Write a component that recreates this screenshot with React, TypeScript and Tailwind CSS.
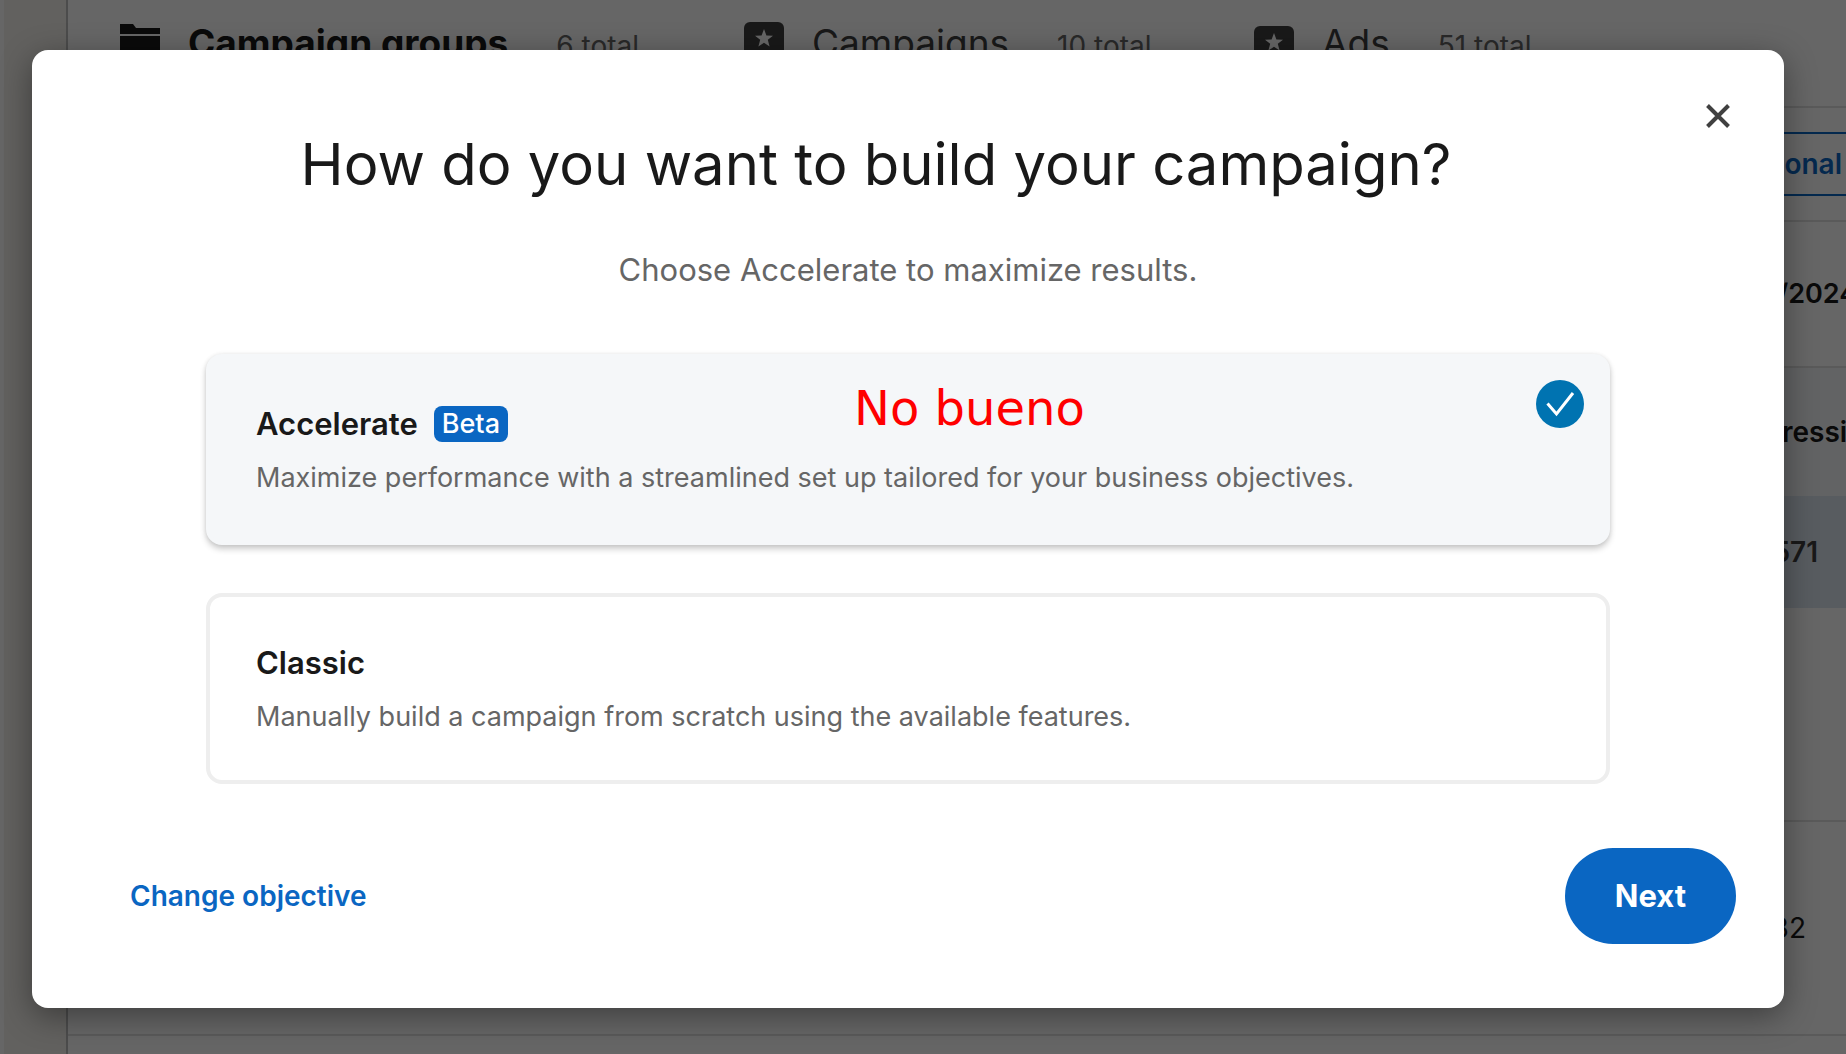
import { useState } from "react";
import type { ReactNode } from "react";

type Mode = "accelerate" | "classic";

interface OptionCardProps {
  value: Mode;
  selected: boolean;
  title: string;
  badge?: string;
  description: string;
  note?: string;
  onSelect: (value: Mode) => void;
}

function FolderIcon() {
  return (
    <svg viewBox="0 0 40 36" className="h-9 w-10" aria-hidden="true">
      <path d="M0 0h13l3 4h24v6H0zM0 12h40v24H0z" fill="#191919" />
    </svg>
  );
}

function CampaignIcon() {
  return (
    <svg viewBox="0 0 40 40" className="h-10 w-10" aria-hidden="true">
      <rect width="40" height="40" rx="6" fill="#404040" />
      <path d="M20 7l2.400 6.500 6.600.2-5.200 4.100 1.800 6.700-5.600-3.800-5.600 3.800 1.800-6.700-5.200-4.100 6.600-.2z" fill="#fff" />
    </svg>
  );
}

function AdIcon() {
  return (
    <svg viewBox="0 0 40 32" className="h-8 w-10" aria-hidden="true">
      <rect width="40" height="32" rx="6" fill="#404040" />
      <path d="M20 7l2.400 6.500 6.600.2-5.200 4.100 1.800 6.700-5.600-3.800-5.600 3.800 1.800-6.700-5.200-4.100 6.600-.2z" fill="#fff" />
    </svg>
  );
}

function PageTab({ icon, label, total, active }: { icon: ReactNode; label: string; total: string; active?: boolean }) {
  return (
    <div className={`flex h-10 shrink-0 items-center gap-7 whitespace-nowrap ${active ? "w-[624px]" : "w-[510px]"}`}>
      {icon}
      <div className="flex items-baseline gap-12 pt-1">
        <span className={`text-[37px] leading-10 ${active ? "font-bold text-[#191919]" : "font-normal text-[#404040]"}`}>
          {label}
        </span>
        <span className="text-[28px] leading-10 font-normal text-[#666666]">{total}</span>
      </div>
    </div>
  );
}

function CampaignPage() {
  return (
    <div className="flex h-full bg-white" aria-hidden="true">
      <div className="w-1 shrink-0" />
      <div className="w-16 shrink-0 border-r-2 border-[#bfbfbf] bg-[#f4f2ee]" />
      <div className="min-w-0 flex-1 overflow-hidden text-[28px] leading-10 font-semibold text-[#191919]">
        <div className="flex h-[108px] border-b-2 border-[#e0e0e0] pt-[22px] pl-[52px]">
          <PageTab icon={<FolderIcon />} label="Campaign groups" total="6 total" active />
          <PageTab icon={<CampaignIcon />} label="Campaigns" total="10 total" />
          <PageTab icon={<AdIcon />} label="Ads" total="51 total" />
        </div>
        <div className="flex h-[114px] items-center justify-end border-b-2 border-[#e0e0e0]">
          <div className="flex h-16 w-40 items-center justify-end border-y-2 border-[#0a66c2] pr-1 text-[#0a66c2]">onal</div>
        </div>
        <div className="flex h-[146px] items-center justify-end border-b-2 border-[#e0e0e0] text-[27px]">
          <span className="w-[68px]">/2024</span>
        </div>
        <div className="flex h-32 items-center justify-end bg-[#f6f8fb]">
          <span className="w-16">ressi</span>
        </div>
        <div className="flex h-28 items-center justify-end bg-[#dce6f1] pr-7 text-[#404040]">571</div>
        <div className="h-[214px] border-b-2 border-[#e0e0e0]" />
        <div className="flex h-[214px] items-center justify-end border-b-2 border-[#e0e0e0] pr-10 font-normal">82</div>
      </div>
    </div>
  );
}

function OptionCard({ value, selected, title, badge, description, note, onSelect }: OptionCardProps) {
  return (
    <label
      className={`relative block cursor-pointer rounded-2xl border-4 px-[46px] pt-[46px] pb-[43px] ${
        selected
          ? "border-[#f5f7f9] bg-[#f5f7f9] shadow-[0_4px_6px_rgba(0,0,0,0.2),0_0_4px_rgba(0,0,0,0.08)]"
          : "border-[#eeeeee] bg-white"
      }`}
    >
      <input
        type="radio"
        name="mode"
        value={value}
        checked={selected}
        onChange={() => onSelect(value)}
        className="sr-only"
      />
      <span className="flex items-center gap-4">
        <span className="text-[31px] leading-10 font-semibold text-[#191919]">{title}</span>
        {badge && (
          <span className="rounded-lg bg-[#0a66c2] px-2 text-[27px] leading-9 font-medium text-white">{badge}</span>
        )}
      </span>
      <span className="mt-3.5 block text-[27px] leading-10 text-[#666666]">{description}</span>
      {note && (
        <span className="absolute top-5 left-[644px] font-['DejaVu_Sans',sans-serif] text-[48px] leading-[60px] text-[#ff0000]">
          {note}
        </span>
      )}
      {selected && (
        <svg viewBox="0 0 48 48" className="absolute top-[22px] right-[22px] size-12" aria-hidden="true">
          <circle cx="24" cy="24" r="24" fill="#0073b1" />
          <path d="M11.500 23.500l9 10.500L37 13" fill="none" stroke="#fff" strokeWidth="3" />
        </svg>
      )}
    </label>
  );
}

export default function App() {
  const [mode, setMode] = useState<Mode>("accelerate");

  return (
    <div className="relative h-screen overflow-hidden font-['Inter',sans-serif]">
      <CampaignPage />
      <div className="absolute inset-0 bg-black/60 pt-[50px] pr-[62px] pl-8">
        <div
          role="dialog"
          aria-modal="true"
          aria-labelledby="dialog-title"
          className="relative rounded-2xl bg-white pb-16 shadow-[0_8px_32px_rgba(0,0,0,0.4)]"
        >
          <button type="button" aria-label="Dismiss" className="absolute top-12 right-12 p-1.5">
            <svg viewBox="0 0 24 24" className="size-6" fill="none" stroke="#404040" strokeWidth="4" aria-hidden="true">
              <path d="M1.500 1.500l21 21M22.500 1.500l-21 21" />
            </svg>
          </button>

          <h1 id="dialog-title" className="pt-[74px] pr-16 text-center text-[58px] leading-[80px] text-[#191919]">
            How do you want to build your campaign?
          </h1>
          <p className="mt-[46px] text-center text-[31px] leading-10 text-[#666666]">
            Choose Accelerate to maximize results.
          </p>

          <div className="mt-16 flex flex-col gap-12 px-[174px]">
            <OptionCard
              value="accelerate"
              selected={mode === "accelerate"}
              title="Accelerate"
              badge="Beta"
              description="Maximize performance with a streamlined set up tailored for your business objectives."
              note="No bueno"
              onSelect={setMode}
            />
            <OptionCard
              value="classic"
              selected={mode === "classic"}
              title="Classic"
              description="Manually build a campaign from scratch using the available features."
              onSelect={setMode}
            />
          </div>

          <div className="mt-16 flex items-center justify-between pr-12 pl-[98px]">
            <button type="button" className="text-[28px] leading-10 font-semibold text-[#0a66c2]">
              Change objective
            </button>
            <button type="button" className="h-24 rounded-full bg-[#0a66c2] px-[50px] text-[31px] font-bold text-white">
              Next
            </button>
          </div>
        </div>
      </div>
    </div>
  );
}
